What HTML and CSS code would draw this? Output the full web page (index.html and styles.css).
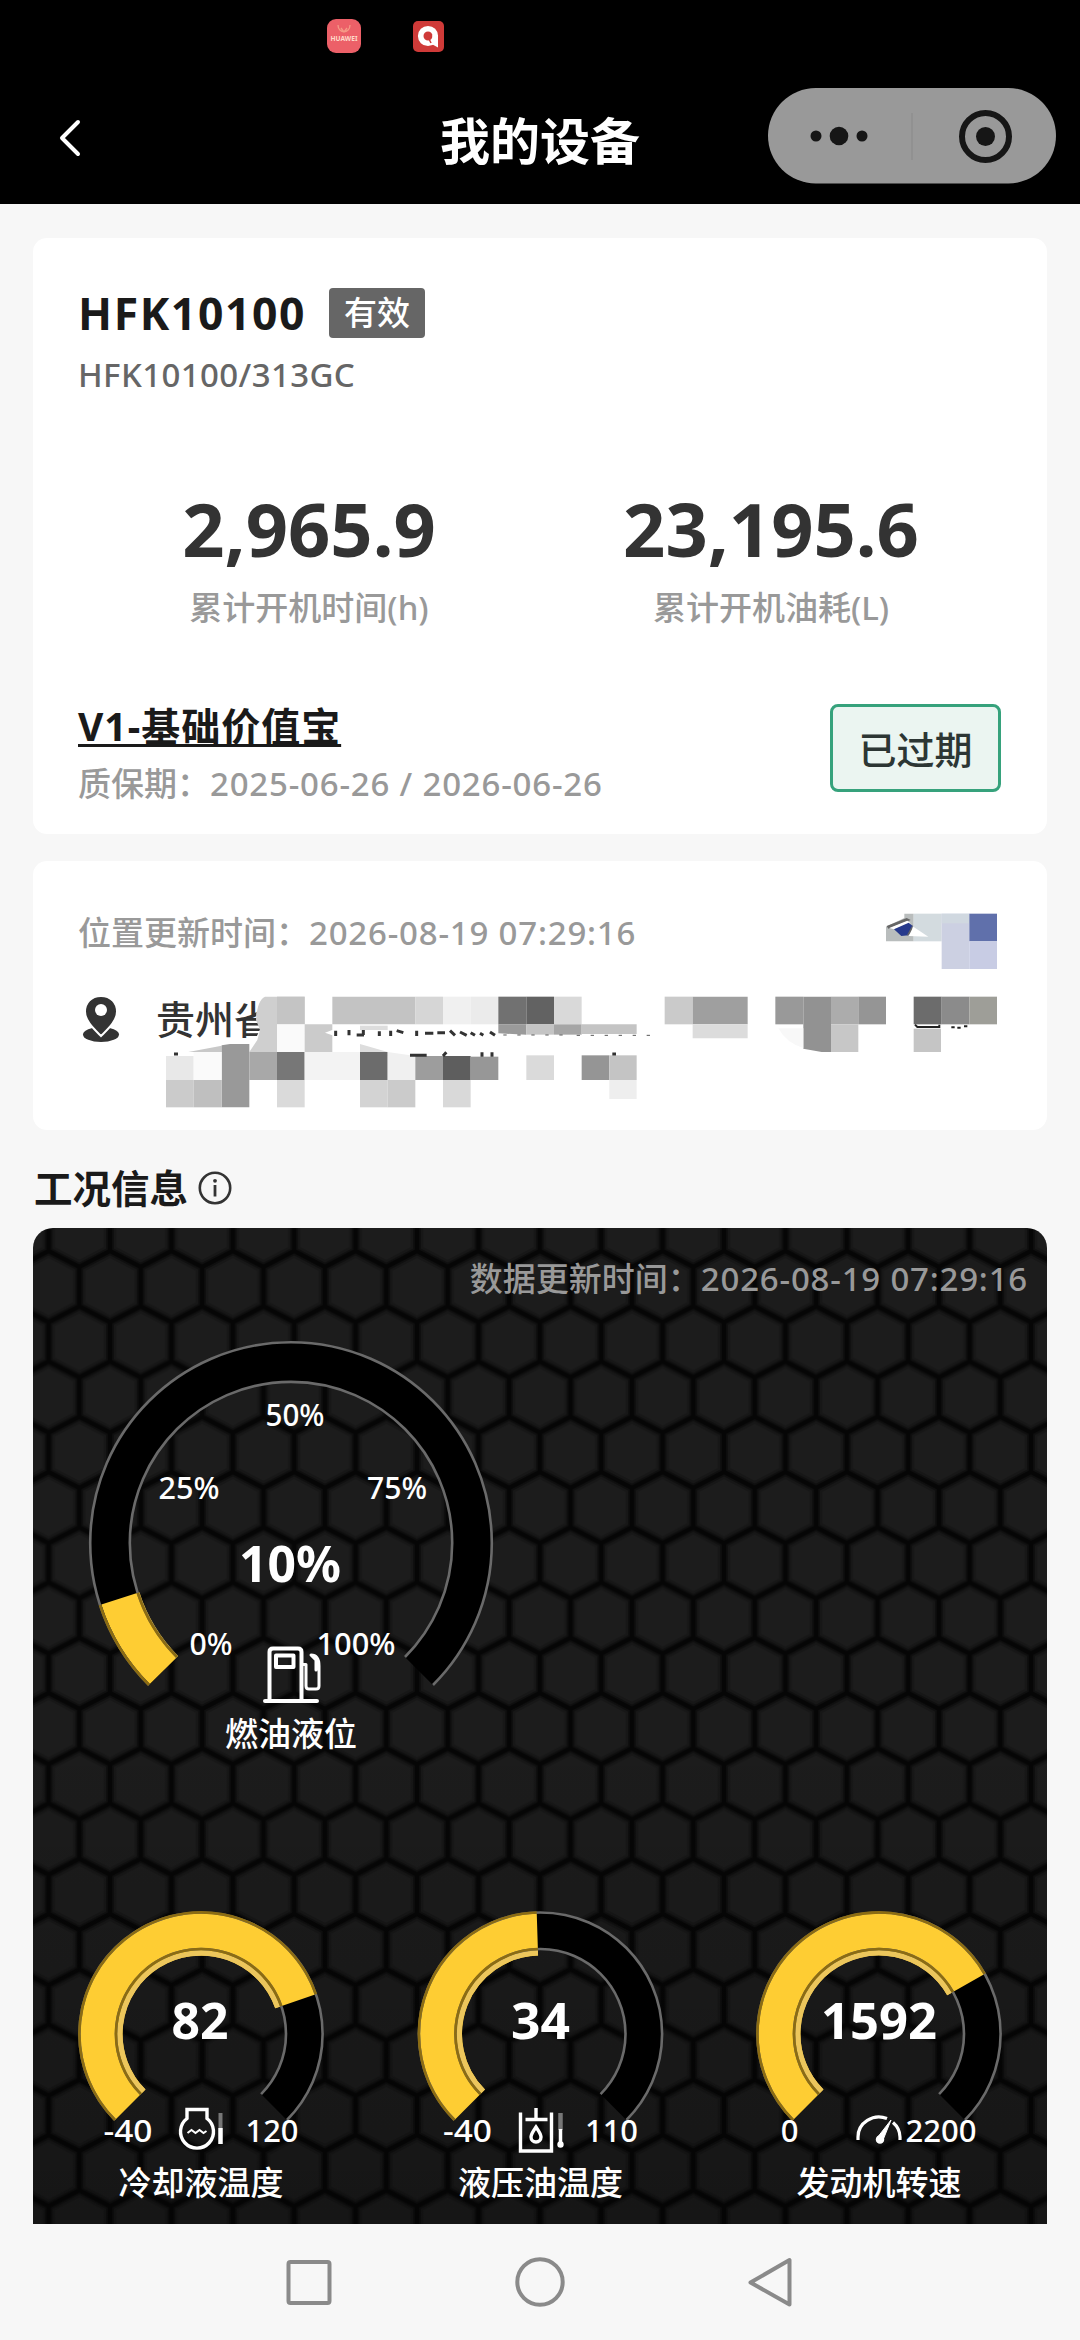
FILE: index.html
```html
<!DOCTYPE html>
<html lang="zh-CN">
<head>
<meta charset="utf-8">
<title>我的设备</title>
<link rel="stylesheet" href="styles.css">
</head>
<body>
<header class="top">
  <div class="status">
    <svg class="app-badge" viewBox="0 0 34 34" width="34" height="34">
      <rect width="34" height="34" rx="9" fill="#ec6068"/>
      <path d="M11 6c0 9 12 9 12 0M14 9l3 4 3-4" fill="none" stroke="#f59a86" stroke-width="1.3"/>
      <text x="17" y="22" class="badge-text" textLength="27" lengthAdjust="spacingAndGlyphs">HUAWEI</text>
    </svg>
    <svg class="app-badge" viewBox="0 0 31 31" width="31" height="31">
      <rect width="31" height="31" rx="5" fill="#cf3a38"/>
      <circle cx="15" cy="15" r="7.300" fill="none" stroke="#fff" stroke-width="5.600"/>
      <path d="M19.500 14H25V26.500L19.500 23.500Z" fill="#fff"/>
      <path d="M15.500 17L18 22" stroke="#cf3a38" stroke-width="1.500"/>
    </svg>
  </div>
  <div class="navbar">
    <svg class="back" viewBox="0 0 24 38" width="24" height="38"><path d="M20 3L4 19L20 35" fill="none" stroke="#fff" stroke-width="4" stroke-linecap="round" stroke-linejoin="round"/></svg>
    <h1 class="title">我的设备</h1>
    <svg class="capsule" viewBox="0 0 288 96" width="288" height="96">
      <rect width="288" height="95.500" rx="47.700" fill="#999"/>
      <g fill="#161616"><circle cx="48" cy="48" r="5.500"/><circle cx="71" cy="48" r="9.300"/><circle cx="94" cy="48" r="5.500"/><circle cx="217.500" cy="48.500" r="9.500"/></g>
      <path d="M144 25V72" stroke="#8f8f8f" stroke-width="1.500"/>
      <circle cx="217.500" cy="48.500" r="23.500" fill="none" stroke="#161616" stroke-width="6"/>
    </svg>
  </div>
</header>

<main class="page">
  <section class="card device">
    <div class="name-row"><span class="name">HFK10100</span><span class="tag">有效</span></div>
    <div class="model">HFK10100/313GC</div>
    <div class="stats">
      <div class="stat"><div class="num">2,965.9</div><div class="cap">累计开机时间(h)</div></div>
      <div class="stat"><div class="num">23,195.6</div><div class="cap">累计开机油耗(L)</div></div>
    </div>
    <div class="plan">
      <div>
        <div class="plan-name">V1-基础价值宝</div>
        <div class="muted term">质保期：<span class="digits">2025-06-26 / 2026-06-26</span></div>
      </div>
      <div class="expired">已过期</div>
    </div>
  </section>

  <section class="card place">
    <div class="muted place-time">位置更新时间：<span class="digits">2026-08-19 07:29:16</span></div>
    <div class="addr">
      <svg class="pin" viewBox="0 0 38 46" width="38" height="46">
        <ellipse cx="19" cy="38.500" rx="18" ry="7.500" fill="#333"/>
        <path d="M19 0C9 0 3 7 3 15.500C3 25 12 33 19 40C26 33 35 25 35 15.500C35 7 29 0 19 0Z" fill="#333" stroke="#fff" stroke-width="2"/>
        <circle cx="19" cy="14" r="6" fill="#fff"/>
      </svg>
      <span class="addr-text">贵州省</span>
    </div>
    <svg class="mosaic" viewBox="0 0 1014 269" width="1014" height="269">
      <g transform="translate(117 119) scale(.33333)">
        <path d="M330 50Q316 90 320 120L332 145L310 190L480 190V20H330Z" fill="#fff"/>
        <path d="M345 50H464V133H381V216H298L322 180L330 150L318 120Q322 60 345 50Z" fill="#cfcfcf"/>
        <path d="M381 50H464V133H381Z" fill="#c4c4c4"/><path d="M381 133H464V216H381Z" fill="#fafafa"/>
        <path d="M464 133H547V150L525 158L547 166V216H464Z" fill="#cbcbcb"/>
        <path d="M547 50H796V133H547Z" fill="#c3c3c3"/><path d="M796 50H879V133H796Z" fill="#d6d6d6"/>
        <path d="M879 50H962V133H879Z" fill="#f0f0f0"/><path d="M962 50H1045V133H962Z" fill="#ebebeb"/>
        <path d="M1045 50H1129V133H1045Z" fill="#717171"/><path d="M1129 50H1212V133H1129Z" fill="#626262"/><path d="M1212 50H1295V133H1212Z" fill="#d9d9d9"/>
        <path d="M1045 133H1129V164L1045 160Z" fill="#9a9a9a"/><path d="M1129 133H1212V164H1129Z" fill="#c4c4c4"/><path d="M1212 133H1295V164H1212Z" fill="#a6a6a6"/><path d="M1295 133H1460V162H1295Z" fill="#c4c4c4"/>
        <path d="M630 137H713V150H630Z" fill="#ddd"/>
        <path d="M115 216L215 197V216Z" fill="#c8c8c8"/><path d="M630 192L713 216H630Z" fill="#ddd"/>
        <path d="M215 196L240 192H298V382H215Z" fill="#999"/>
        <path d="M48 228H131V300H48Z" fill="#e8e8e8"/><path d="M131 216H215V300H131Z" fill="#fafafa"/><path d="M298 216H381V300H298Z" fill="#a8a8a8"/><path d="M381 216H464V300H381Z" fill="#777"/>
        <path d="M464 216H630V300H464Z" fill="#f3f3f3"/><path d="M630 216H713V300H630Z" fill="#6c6c6c"/><path d="M713 216L796 228V300H713Z" fill="#f0f0f0"/><path d="M796 228H879V300H796Z" fill="#9d9d9d"/><path d="M879 228H962V300H879Z" fill="#5e5e5e"/><path d="M962 230H1045V300H962Z" fill="#979797"/>
        <path d="M1129 226H1212V300H1129Z" fill="#dadada"/><path d="M1295 226H1378V300H1295Z" fill="#959595"/><path d="M1378 226H1460V300H1378Z" fill="#c4c4c4"/><path d="M1378 300H1460V357H1378Z" fill="#eee"/>
        <path d="M48 300H131V382H48Z" fill="#cbcbcb"/><path d="M131 300H215V382H131Z" fill="#bfbfbf"/><path d="M381 300H464V382H381Z" fill="#dadada"/><path d="M630 300H713V382H630Z" fill="#d3d3d3"/><path d="M713 300H796V382H713Z" fill="#cbcbcb"/><path d="M879 300H962V382H879Z" fill="#d9d9d9"/>
        <path d="M557 152V168M597 150V166M620 165H642M640 150V165M688 154V168M722 152V168M740 152L760 158M800 152V168M825 160H850M862 158H885M900 152L915 166M930 156L950 166M962 158L975 166M990 160L1000 166M1020 156L1035 166M780 226H830M879 228L889 217M996 217V230M1026 217V230M72 222H84M1387 222H1398" fill="none" stroke="#333" stroke-width="9"/>
        <path d="M1060 165H1260M1280 166H1500" stroke="#555" stroke-width="3" stroke-dasharray="10 32"/>
      </g>
      <g transform="translate(607 29) scale(.33333)">
        <path d="M738 110L793 84V71H821V154H738Z" fill="#b9bdbd"/><path d="M821 71H905V154H821Z" fill="#d3dbdf"/><path d="M905 71H988V237H905Z" fill="#ccd0e2"/><path d="M905 71H988V100H905Z" fill="#d0d8e0"/><path d="M988 71H1071V154H988Z" fill="#6070ab"/><path d="M988 154H1071V237H988Z" fill="#c8cce4"/>
        <path d="M740 108L800 84L812 90L745 116Z" fill="#666"/><path d="M748 114L802 92L812 100L762 118Z" fill="#fff"/><path d="M762 118L806 98L818 108L806 136L784 138Z" fill="#26398c"/><path d="M818 104L800 137L815 130Z" fill="#666"/><path d="M820 110L865 140L806 138Z" fill="#fff"/>
        <path d="M74 320H158V403H74Z" fill="#cacaca"/><path d="M158 320H323V403H158Z" fill="#9f9f9f"/><path d="M158 403H323V445H158Z" fill="#dcdcdc"/>
        <path d="M406 320H490V403H406Z" fill="#999"/><path d="M490 320H573V486H545L490 476Z" fill="#929292"/><path d="M573 320H655V403H573Z" fill="#acacac"/><path d="M655 320H738V403H655Z" fill="#959595"/><path d="M573 403H655V486H573Z" fill="#c7c7c7"/><path d="M415 415H490V474Q440 460 415 415Z" fill="#f8f8f8"/>
        <path d="M821 320H905V403H821Z" fill="#6c6c6c"/><path d="M905 320H988V403H905Z" fill="#8b8b8b"/><path d="M988 320H1071V403H988Z" fill="#9e9e98"/><path d="M821 416H903V486H821Z" fill="#c5c5c5"/>
        <path d="M825 404L832 411H898V404M934 412H944M952 413H962M972 409H982" fill="none" stroke="#222" stroke-width="6"/>
      </g>
    </svg>
  </section>

  <div class="section-head">
    <h2>工况信息</h2>
    <svg viewBox="0 0 34 34" width="34" height="34"><circle cx="17" cy="17" r="15.200" fill="none" stroke="#333" stroke-width="2.600"/><circle cx="17" cy="9.800" r="1.900" fill="#333"/><path d="M17 14V25.500" stroke="#333" stroke-width="2.800"/></svg>
  </div>

  <section class="panel">
    <svg class="honeycomb" width="1014" height="996">
      <defs>
        <pattern id="hex" x="77" y="23" width="61.400" height="110.500" patternUnits="userSpaceOnUse">
          <rect width="62" height="111" fill="#1c1c1c"/>
          <g fill="none" stroke-linejoin="round">
            <path d="M-30.700 16L0 0L30.700 16L61.400 0L92.100 16M30.700 16V55.250L0 71.250V110.500L-30.700 126.500M30.700 55.250L61.400 71.250V110.500L92.100 126.500M0 110.500L30.700 126.500L61.400 110.500M0 71.250L-30.700 55.250M61.400 71.250L92.100 55.250" stroke="#171717" stroke-width="13"/>
            <path d="M-30.700 16L0 0L30.700 16L61.400 0L92.100 16M30.700 16V55.250L0 71.250V110.500L-30.700 126.500M30.700 55.250L61.400 71.250V110.500L92.100 126.500M0 110.500L30.700 126.500L61.400 110.500M0 71.250L-30.700 55.250M61.400 71.250L92.100 55.250" stroke="#0f0f0f" stroke-width="8"/>
            <path d="M-30.700 16L0 0L30.700 16L61.400 0L92.100 16M30.700 16V55.250L0 71.250V110.500L-30.700 126.500M30.700 55.250L61.400 71.250V110.500L92.100 126.500M0 110.500L30.700 126.500L61.400 110.500M0 71.250L-30.700 55.250M61.400 71.250L92.100 55.250" stroke="#060606" stroke-width="4.500"/>
          </g>
        </pattern>
        <linearGradient id="shade" x1="0" y1="0" x2="0" y2="1"><stop offset=".5" stop-color="#000" stop-opacity="0"/><stop offset="1" stop-color="#000" stop-opacity=".22"/></linearGradient>
      </defs>
      <rect width="1014" height="996" fill="url(#hex)"/>
      <rect width="1014" height="996" fill="url(#shade)"/>
    </svg>
    <div class="data-time">数据更新时间：<span class="digits">2026-08-19 07:29:16</span></div>

    <div class="fuel">
      <svg viewBox="-258 -210 516 430" width="516" height="430">
        <path d="M-128.300 128.300A181.500 181.500 0 1 1 128.300 128.300" fill="none" stroke="#000" stroke-width="40"/>
        <path d="M-127 127A179.600 179.600 0 0 1 -170.600 55.400" fill="none" stroke="#fecd33" stroke-width="40"/>
        <g class="rim">
          <path d="M-142 142A200.800 200.800 0 1 1 142 142"/><path d="M-114 114A161.200 161.200 0 1 1 114 114"/>
        </g>
        <g class="rim-lit"><path d="M-142 142A200.800 200.800 0 0 1 -191 62"/><path d="M-114 114A161.200 161.200 0 0 1 -153.300 49.800"/></g>
        <g class="tick">
          <text x="4" y="-117" textLength="59" lengthAdjust="spacingAndGlyphs">50%</text>
          <text x="-102" y="-44" textLength="61" lengthAdjust="spacingAndGlyphs">25%</text>
          <text x="106" y="-44" textLength="60" lengthAdjust="spacingAndGlyphs">75%</text>
          <text x="-80" y="111.500" textLength="43" lengthAdjust="spacingAndGlyphs">0%</text>
          <text x="65" y="111.500" textLength="79" lengthAdjust="spacingAndGlyphs">100%</text>
        </g>
        <text class="value" x="-1" y="38.500" textLength="102" lengthAdjust="spacingAndGlyphs">10%</text>
        <g fill="none" stroke="#fff" stroke-width="4" stroke-linejoin="round" stroke-linecap="round" transform="translate(-28 103)">
          <path d="M2 55H54M6.500 54V6Q6.500 2.500 10 2.500H35Q38.500 2.500 38.500 6V54M13 9.500H30.500V21H13Z"/>
          <path d="M39 18.500H43V40Q43 43 46 43H53Q56 43 56 40V20Q56 9 48 9L53 14V24" stroke-width="3"/>
        </g>
        <text class="label" x="0" y="203">燃油液位</text>
      </svg>
    </div>

    <div class="gauges">
      <svg viewBox="-168 -129 338 319" width="338" height="319">
        <path d="M-73.200 73.200A103.500 103.500 0 1 1 73.200 73.200" fill="none" stroke="#000" stroke-width="38"/>
        <path d="M-70.700 70.700A100 100 0 1 1 94.500 -32.700" fill="none" stroke="#fecd33" stroke-width="43"/>
        <path d="M-57.300 57.300A81 81 0 1 1 76.600 -26.500" fill="none" stroke="#ecc65c" stroke-width="5"/>
        <g class="rim"><path d="M-86 86A121.600 121.600 0 1 1 86 86"/><path d="M-60.100 60.100A85 85 0 1 1 60.100 60.100"/></g>
        <g class="rim-lit"><path d="M-86 86A121.600 121.600 0 1 1 114.900 -39.800"/><path d="M-60.100 60.100A85 85 0 1 1 80.300 -27.800"/></g>
        <text class="value" x="-1" y="4.500" textLength="57" lengthAdjust="spacingAndGlyphs">82</text>
        <g class="tick"><text x="-73" y="108" textLength="49" lengthAdjust="spacingAndGlyphs">-40</text><text x="71" y="108" textLength="53" lengthAdjust="spacingAndGlyphs">120</text></g>
        <g fill="none" stroke="#fff" stroke-width="3.400" transform="translate(-1.500 0)">
          <path d="M-12.500 75.500H7.500V84.500A16.500 16.500 0 1 1 -12.500 84.500V75.500Z"/>
          <path d="M-12 99l4-3 4 3 4-3 4 3 3-2" stroke-width="2"/><path d="M21 79V94" stroke="#777" stroke-width="4"/><path d="M21 94V110" stroke-width="4.500"/>
        </g>
        <text class="label" x="0" y="160.500">冷却液温度</text>
      </svg>
      <svg viewBox="-169.500 -129 338 319" width="338" height="319">
        <path d="M-73.200 73.200A103.500 103.500 0 1 1 73.200 73.200" fill="none" stroke="#000" stroke-width="38"/>
        <path d="M-70.700 70.700A100 100 0 0 1 -3.100 -99.900" fill="none" stroke="#fecd33" stroke-width="43"/>
        <path d="M-57.300 57.300A81 81 0 0 1 -2.500 -81" fill="none" stroke="#ecc65c" stroke-width="5"/>
        <g class="rim"><path d="M-86 86A121.600 121.600 0 1 1 86 86"/><path d="M-60.100 60.100A85 85 0 1 1 60.100 60.100"/></g>
        <g class="rim-lit"><path d="M-86 86A121.600 121.600 0 0 1 -3.800 -121.500"/><path d="M-60.100 60.100A85 85 0 0 1 -2.700 -85"/></g>
        <text class="value" x="0" y="4.500" textLength="59" lengthAdjust="spacingAndGlyphs">34</text>
        <g class="tick"><text x="-73" y="108" textLength="49" lengthAdjust="spacingAndGlyphs">-40</text><text x="71" y="108" textLength="53" lengthAdjust="spacingAndGlyphs">110</text></g>
        <g fill="none" stroke="#fff" stroke-width="3.400">
          <path d="M-20 78.500V117H11V78.500M-15 85.500H7M-4.500 74V85M-4.500 93C-8 98-9.500 100-9.500 103A5 5 0 0 0 .5 103C.5 100-1 98-4.500 93Z"/>
          <path d="M20 79V96" stroke="#777" stroke-width="4.500"/><path d="M20 95V112" stroke-width="3.500"/><circle cx="20" cy="110.500" r="1.500"/>
        </g>
        <text class="label" x="0" y="160.500">液压油温度</text>
      </svg>
      <svg viewBox="-170 -129 338 319" width="338" height="319">
        <path d="M-73.200 73.200A103.500 103.500 0 1 1 73.200 73.200" fill="none" stroke="#000" stroke-width="38"/>
        <path d="M-70.700 70.700A100 100 0 1 1 86.900 -49.400" fill="none" stroke="#fecd33" stroke-width="43"/>
        <path d="M-57.300 57.300A81 81 0 1 1 70.400 -40" fill="none" stroke="#ecc65c" stroke-width="5"/>
        <g class="rim"><path d="M-86 86A121.600 121.600 0 1 1 86 86"/><path d="M-60.100 60.100A85 85 0 1 1 60.100 60.100"/></g>
        <g class="rim-lit"><path d="M-86 86A121.600 121.600 0 1 1 105.700 -60.100"/><path d="M-60.100 60.100A85 85 0 1 1 73.900 -42"/></g>
        <text class="value" x="0" y="4.500" textLength="116" lengthAdjust="spacingAndGlyphs">1592</text>
        <g class="tick"><text x="-89.500" y="108">0</text><text x="62" y="108" textLength="71" lengthAdjust="spacingAndGlyphs">2200</text></g>
        <g fill="none" stroke="#fff" stroke-width="3.200">
          <path d="M-21 106V103A21 20 0 0 1 8 84.500M14 88.500A21 20 0 0 1 21 103V106"/>
          <path d="M12 86L4 106L-2 104Z" fill="#fff" stroke-width="1"/><circle cx="1" cy="105.500" r="3.500" fill="#fff" stroke-width="1.500"/>
        </g>
        <text class="label" x="0" y="160.500">发动机转速</text>
      </svg>
    </div>
  </section>
</main>

<nav class="sysbar">
  <svg viewBox="0 0 50 54" width="50" height="54"><rect x="4.500" y="7" width="41" height="41" rx="2" fill="none" stroke="#8a8a8a" stroke-width="4"/></svg>
  <svg viewBox="0 0 54 54" width="54" height="54"><circle cx="27" cy="27" r="22.700" fill="none" stroke="#8a8a8a" stroke-width="4"/></svg>
  <svg viewBox="0 0 50 54" width="50" height="54"><path d="M4.500 27.500L43.500 5V49.500Z" fill="none" stroke="#8a8a8a" stroke-width="4" stroke-linejoin="round"/></svg>
</nav>
</body>
</html>
```
FILE: styles.css
```css
* { box-sizing: border-box; }
body { margin: 0; width: 1080px; height: 2340px; overflow: hidden; background: #f7f7f7; font-family: "Noto Sans", "Noto Sans CJK SC", sans-serif; font-weight: 500; color: #1a1a1a; display: flex; flex-direction: column; }
svg { display: block; flex: none; }
h1, h2 { margin: 0; }

.top { height: 204px; background: #000; color: #fff; }
.status { height: 72px; padding: 0 0 0 327px; display: flex; align-items: center; gap: 52px; }
.badge-text { font-size: 7px; font-weight: 700; fill: #ffd9c9; text-anchor: middle; }
.navbar { height: 132px; display: grid; grid-template-columns: 312px 1fr 312px; align-items: center; padding-bottom: 4px; }
.back { margin: 4px 0 0 58px; }
.title { font-size: 50px; line-height: 60px; text-align: center; font-weight: 700; padding-top: 10px; }
.capsule { justify-self: start; }

.page { padding: 34px 33px 0; }
.card { background: #fff; border-radius: 14px; padding: 0 45px; }
.device { height: 596px; padding-top: 50px; }
.name-row { display: flex; align-items: center; gap: 23px; height: 50px; }
.name { font-size: 44.500px; font-weight: 700; letter-spacing: 1.600px; line-height: 50px; }
.tag { width: 96px; height: 50px; line-height: 50px; border-radius: 4px; background: #666; color: #fff; font-size: 33px; text-align: center; }
.model { margin-top: 13px; font-size: 33px; line-height: 48px; color: #666; letter-spacing: .4px; }
.stats { display: grid; grid-template-columns: 1fr 1fr; margin: 85px 0 0; text-align: center; }
.num { font-size: 74px; line-height: 90px; font-weight: 700; color: #333; }
.cap { font-size: 33px; line-height: 44px; margin-top: 12px; color: #999; }
.plan { display: flex; justify-content: space-between; margin-top: 69px; padding-right: 1px; }
.plan-name { font-size: 39px; line-height: 54px; font-weight: 700; letter-spacing: 1px; text-decoration: underline; text-decoration-thickness: 3px; text-underline-offset: 3px; text-decoration-skip-ink: none; }
.muted { font-size: 33px; line-height: 44px; color: #999; }
.term { margin-top: 9px; }
.digits { letter-spacing: .8px; }
.expired { margin-top: 5px; width: 171px; height: 88px; border: 3px solid #36a27c; border-radius: 8px; background: #ebf5f1; color: #2c3634; font-size: 38px; line-height: 84px; text-align: center; }

.place { position: relative; height: 269px; margin-top: 27px; padding-top: 50px; }
.addr { display: flex; align-items: center; gap: 36px; margin: 40px 0 0 4px; height: 48px; }
.addr-text { font-size: 39px; line-height: 48px; color: #333; }
.mosaic { position: absolute; left: 0; top: 0; }

.section-head { display: flex; align-items: center; gap: 10px; height: 98px; padding: 18px 0 0 1px; }
.section-head h2 { font-size: 38.500px; line-height: 50px; font-weight: 700; }

.panel { position: relative; height: 996px; border-radius: 20px 20px 0 0; overflow: hidden; color: #fff; display: flex; flex-direction: column; }
.honeycomb { position: absolute; left: 0; top: 0; }
.data-time { position: relative; text-align: right; padding: 28px 19px 0 0; height: 105px; font-size: 33px; line-height: 46px; color: #999; }
.fuel, .gauges { position: relative; }
.gauges { display: flex; margin-top: 142px; }
.rim { fill: none; stroke: #6a6a6a; stroke-width: 2.600; }
.rim-lit { fill: none; stroke: #8c6c12; stroke-width: 2.600; }
text { fill: #fff; text-anchor: middle; }
.tick { font-size: 31px; }
.value { font-size: 51px; font-weight: 700; }
.label { font-size: 33px; }

.sysbar { flex: 1; display: flex; justify-content: center; align-items: center; gap: 179px; }
```
